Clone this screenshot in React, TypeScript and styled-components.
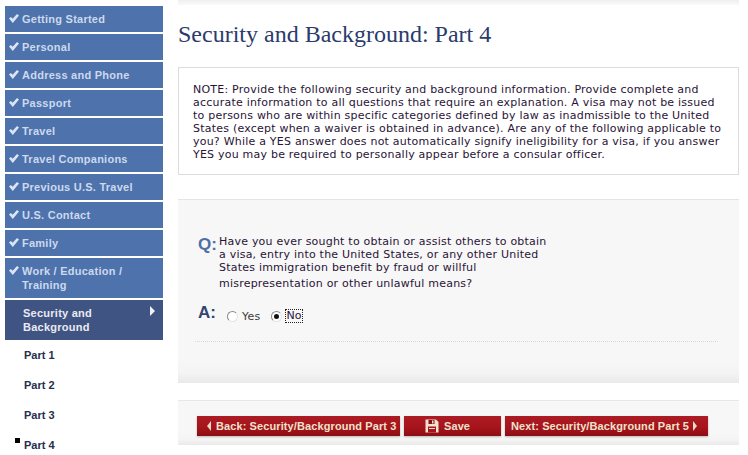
import React from 'react';
import styled, { createGlobalStyle } from 'styled-components';

const GlobalStyle = createGlobalStyle`
  html, body {
    margin: 0;
    padding: 0;
    background: #fff;
    height: 455px;
    overflow: hidden;
  }
`;

const Root = styled.div`
  display: flex;
  width: 748px;
  height: 455px;
  overflow: hidden;
  background: #fff;
`;

const Sidebar = styled.nav`
  width: 158px;
  margin-left: 5px;
  padding-top: 6px;
  display: flex;
  flex-direction: column;
  gap: 2px;
  font-family: 'Liberation Sans', Arial, sans-serif;
  font-size: 11px;
  font-weight: bold;
  letter-spacing: 0.25px;
  flex-shrink: 0;
`;

const NavItem = styled.div`
  background: #4e72ab;
  color: #ccd9ee;
  line-height: 14px;
  padding: 6px 8px 6px 17px;
  position: relative;
`;

const Check = styled.svg`
  position: absolute;
  left: 4px;
  top: 8px;
  width: 10px;
  height: 9px;
  fill: #dbe5f5;
`;

const ActiveItem = styled.div`
  background: #3f5482;
  color: #eaeaf0;
  line-height: 14px;
  padding: 6px 24px 6px 18px;
  position: relative;
`;

const ActiveArrow = styled.span`
  position: absolute;
  left: 145px;
  top: 6px;
  width: 0;
  height: 0;
  border-left: 5px solid #f2f2f2;
  border-top: 5px solid transparent;
  border-bottom: 5px solid transparent;
`;

const SubList = styled.div`
  display: flex;
  flex-direction: column;
`;

const SubItem = styled.div`
  height: 30px;
  line-height: 30px;
  padding-left: 19px;
  color: #262f4a;
  letter-spacing: 0;
  position: relative;
`;

const Bullet = styled.span`
  position: absolute;
  left: 10px;
  top: 8px;
  width: 5px;
  height: 5px;
  background: #000;
`;

const Main = styled.main`
  margin-left: 15px;
  width: 561px;
  flex-shrink: 0;
  display: flex;
  flex-direction: column;
`;

const TopStrip = styled.div`
  height: 5px;
  background: linear-gradient(#efefef, #fafafa);
`;

const Title = styled.h1`
  margin: 14px 0 0;
  font-family: 'Liberation Serif', 'Times New Roman', serif;
  font-size: 24px;
  font-weight: normal;
  line-height: 30px;
  color: #2a3b6c;
  height: 48px;
`;

const NoteBox = styled.div`
  box-sizing: border-box;
  height: 108px;
  border: 1px solid #dcdcdc;
  padding: 15px 0 0 14px;
  font-family: 'DejaVu Sans', Verdana, sans-serif;
  font-size: 11px;
  letter-spacing: 0.22px;
  line-height: 13px;
  white-space: nowrap;
  color: #2a1436;
`;

const QuestionPanel = styled.section`
  box-sizing: border-box;
  margin-top: 24px;
  height: 184px;
  background: linear-gradient(to top, #e9e9e9, #f4f4f4 10px, #f7f7f7 24px);
  border-top: 1px dotted #e0e0e0;
  padding: 35px 21px 0 20px;
`;

const QuestionRow = styled.div`
  display: flex;
  align-items: flex-start;
`;

const Label = styled.span`
  font-family: 'Liberation Sans', Arial, sans-serif;
  font-size: 17px;
  font-weight: bold;
  color: #4e6fa6;
  width: 21px;
  flex-shrink: 0;
  line-height: 19px;
`;

const QuestionText = styled.p`
  margin: 0;
  font-family: 'DejaVu Sans', Verdana, sans-serif;
  font-size: 11px;
  letter-spacing: 0.22px;
  line-height: 13px;
  white-space: nowrap;
  color: #2a1436;
`;

const LastLine = styled.span`
  display: block;
  margin-top: 3px;
`;

const AnswerRow = styled.div`
  display: flex;
  align-items: flex-start;
  margin: 13px 0 0 -3px;
  padding: 0 0 24px 3px;
  height: 14px;
  box-sizing: content-box;
  border-bottom: 1px dotted #d8d8d8;
`;

const AnswerLabel = styled(Label)`
  color: #33466f;
  width: 29px;
`;

const RadioLabel = styled.label`
  display: flex;
  align-items: center;
  gap: 4px;
  margin: 7px 11px 0 0;
  font-family: 'DejaVu Sans', Verdana, sans-serif;
  font-size: 11px;
  letter-spacing: 0.22px;
  line-height: 13px;
  color: #3a3a3a;
`;

const Radio = styled.span<{ $checked?: boolean }>`
  box-sizing: border-box;
  width: 11px;
  height: 11px;
  border-radius: 50%;
  background: #fff;
  border: 1px solid #8a8a8a;
  border-right-color: #e4e4e4;
  border-bottom-color: #e4e4e4;
  display: flex;
  align-items: center;
  justify-content: center;
  &::after {
    content: '';
    display: ${p => (p.$checked ? 'block' : 'none')};
    width: 5px;
    height: 5px;
    border-radius: 50%;
    background: #111;
  }
`;

const Focused = styled.span`
  outline: 1px dotted #222;
  color: #2a1436;
  line-height: 12px;
`;

const ButtonPanel = styled.div`
  box-sizing: border-box;
  margin-top: 17px;
  height: 45px;
  background: linear-gradient(to top, #eaeaea, #f5f5f5 6px, #f7f7f7 14px);
  border-top: 1px dotted #e4e4e4;
  padding: 15px 0 0 19px;
  display: flex;
  gap: 4px;
`;

const RedButton = styled.button<{ $width: number; $pad: number }>`
  box-sizing: border-box;
  width: ${p => p.$width}px;
  height: 20px;
  padding: 0 0 0 ${p => p.$pad}px;
  border: 0;
  background: linear-gradient(#ab1c24, #a8141b 55%, #8c0e14);
  box-shadow: 0 1px 2px rgba(0, 0, 0, 0.25);
  color: #efe3cf;
  font-family: 'Liberation Sans', Arial, sans-serif;
  font-size: 11px;
  font-weight: bold;
  letter-spacing: 0.1px;
  white-space: nowrap;
  display: flex;
  align-items: center;
  justify-content: flex-start;
`;

const ArrowLeft = styled.span`
  margin-right: 5px;
  border-right: 4px solid #e8dcc8;
  border-top: 5px solid transparent;
  border-bottom: 5px solid transparent;
`;

const ArrowRight = styled.span`
  margin-left: 4px;
  border-left: 4px solid #e8dcc8;
  border-top: 5px solid transparent;
  border-bottom: 5px solid transparent;
`;

const SaveIcon = styled.svg`
  width: 14px;
  height: 14px;
  margin-right: 5px;
`;

const CheckIcon = () => (
  <Check viewBox="0 0 10 9">
    <path d="M0 4.6 L1.9 2.9 L3.7 4.8 L8 0 L10 1.5 L3.8 9 Z" />
  </Check>
);

const done = [
  'Getting Started',
  'Personal',
  'Address and Phone',
  'Passport',
  'Travel',
  'Travel Companions',
  'Previous U.S. Travel',
  'U.S. Contact',
  'Family',
];

const App = () => {
  return (
    <Root>
      <GlobalStyle />
      <Sidebar>
        {done.map(name => (
          <NavItem key={name}>
            <CheckIcon />
            {name}
          </NavItem>
        ))}
        <NavItem>
          <CheckIcon />
          Work / Education /<br />Training
        </NavItem>
        <div>
          <ActiveItem>
            Security and<br />Background
            <ActiveArrow />
          </ActiveItem>
          <SubList>
            <SubItem>Part 1</SubItem>
            <SubItem>Part 2</SubItem>
            <SubItem>Part 3</SubItem>
            <SubItem><Bullet />Part 4</SubItem>
          </SubList>
        </div>
      </Sidebar>
      <Main>
        <TopStrip />
        <Title>Security and Background: Part 4</Title>
        <NoteBox>
          NOTE: Provide the following security and background information. Provide complete and<br />
          accurate information to all questions that require an explanation. A visa may not be issued<br />
          to persons who are within specific categories defined by law as inadmissible to the United<br />
          States (except when a waiver is obtained in advance). Are any of the following applicable to<br />
          you? While a YES answer does not automatically signify ineligibility for a visa, if you answer<br />
          YES you may be required to personally appear before a consular officer.
        </NoteBox>
        <QuestionPanel>
          <QuestionRow>
            <Label>Q:</Label>
            <QuestionText>
              Have you ever sought to obtain or assist others to obtain<br />
              a visa, entry into the United States, or any other United<br />
              States immigration benefit by fraud or willful
              <LastLine>misrepresentation or other unlawful means?</LastLine>
            </QuestionText>
          </QuestionRow>
          <AnswerRow>
            <AnswerLabel>A:</AnswerLabel>
            <RadioLabel><Radio />Yes</RadioLabel>
            <RadioLabel><Radio $checked /><Focused>No</Focused></RadioLabel>
          </AnswerRow>
        </QuestionPanel>
        <ButtonPanel>
          <RedButton $width={203} $pad={10}><ArrowLeft />Back: Security/Background Part 3</RedButton>
          <RedButton $width={97} $pad={21}>
            <SaveIcon viewBox="0 0 14 14">
              <path d="M0.5 0.5 H11 L13.5 3 V13.5 H0.5 Z" fill="#efe3cf" />
              <rect x="3.5" y="1" width="6" height="4" fill="#8c0e14" />
              <rect x="7" y="1.5" width="1.5" height="3" fill="#efe3cf" />
              <rect x="3" y="7.5" width="8" height="6" fill="#a8141b" />
              <rect x="4" y="9" width="6" height="1" fill="#efe3cf" />
            </SaveIcon>
            Save
          </RedButton>
          <RedButton $width={203} $pad={6}>Next: Security/Background Part 5<ArrowRight /></RedButton>
        </ButtonPanel>
      </Main>
    </Root>
  );
};

export default App;
